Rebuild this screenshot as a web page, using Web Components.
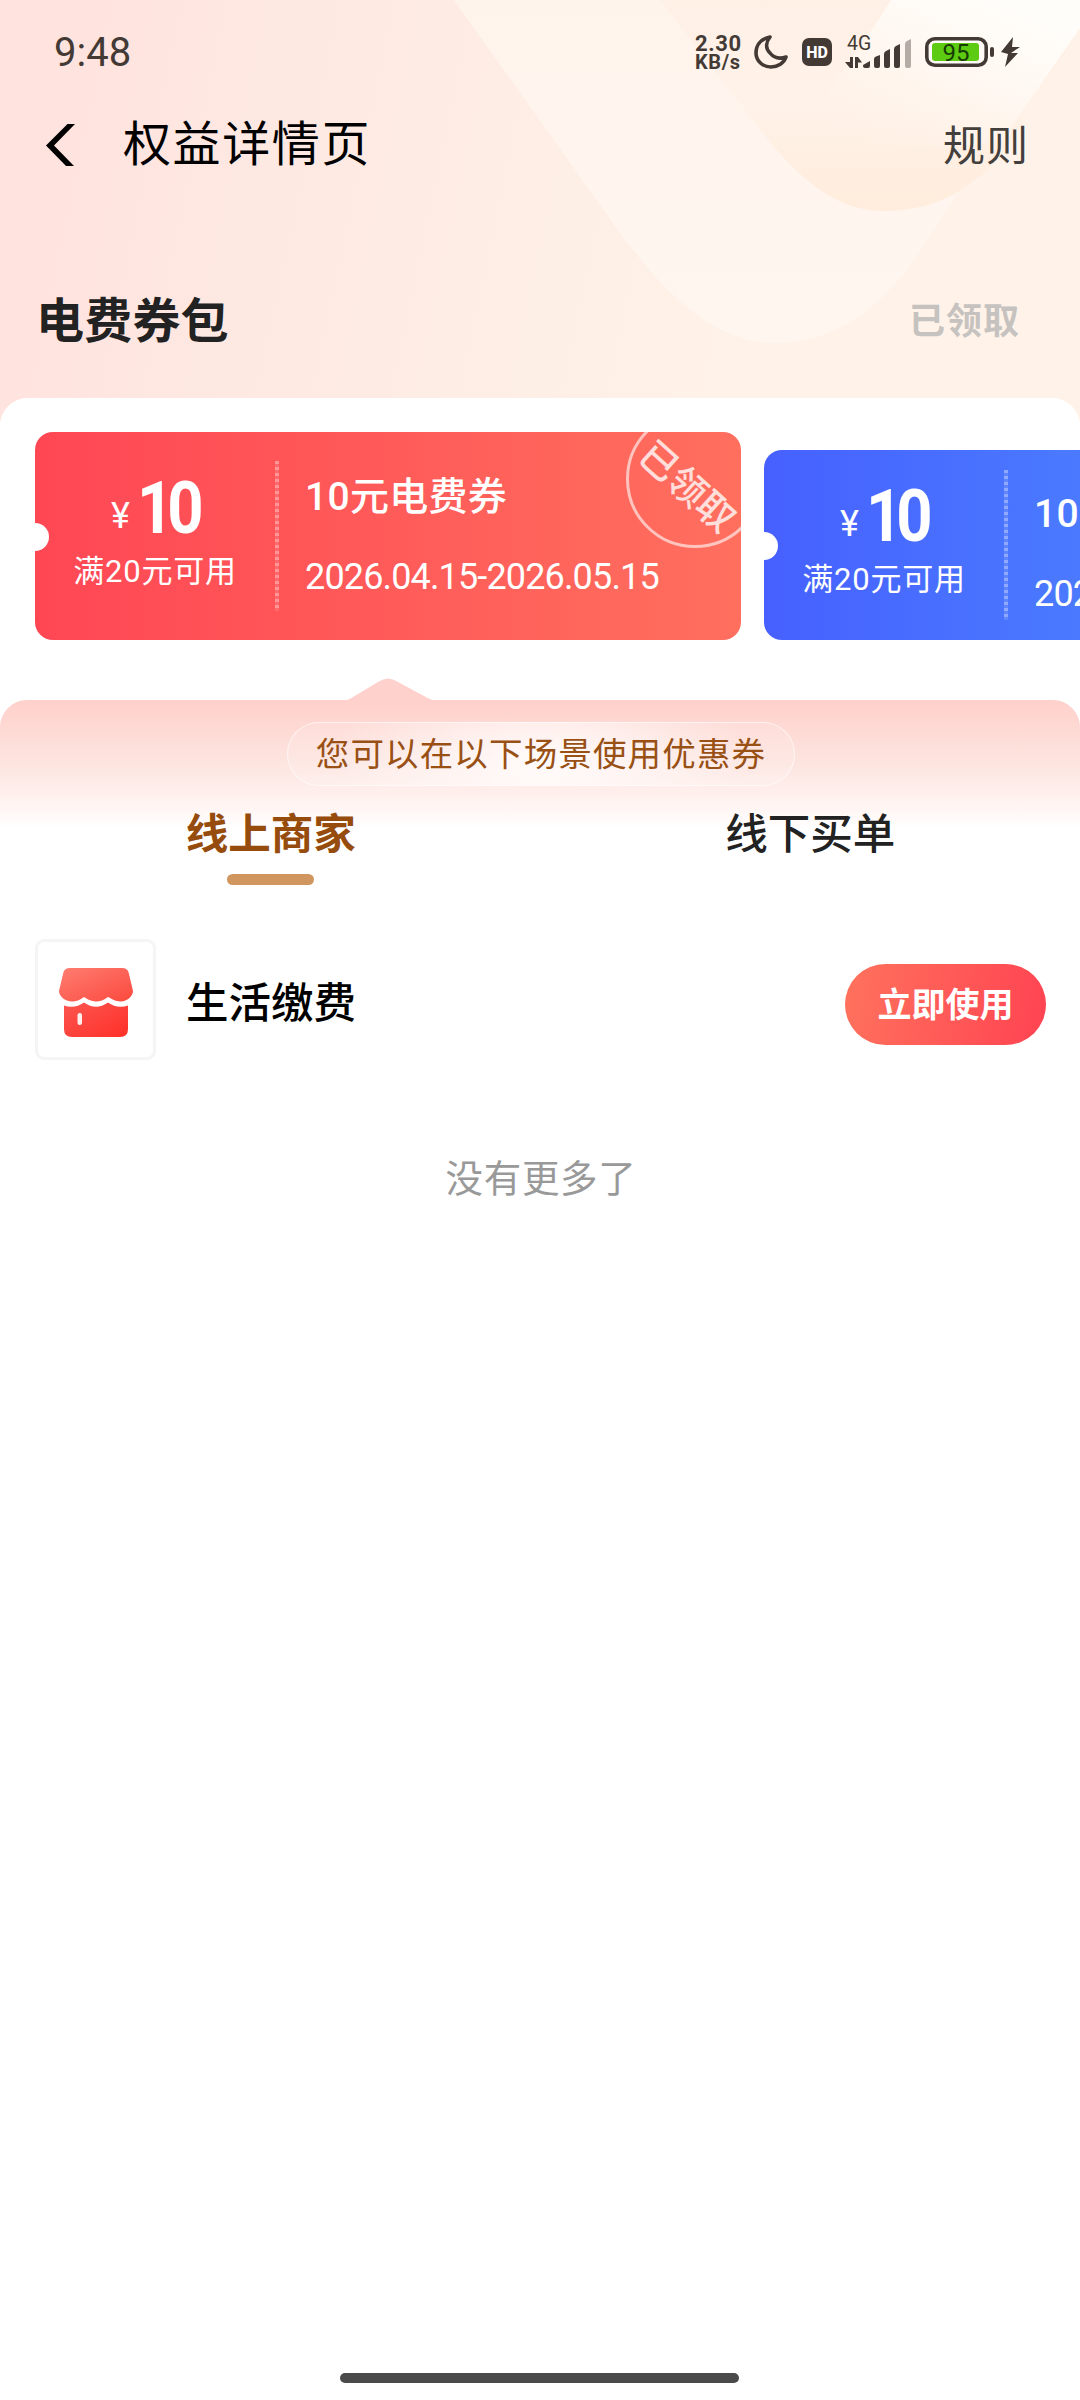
<!DOCTYPE html>
<html lang="zh-CN">
<head>
<meta charset="utf-8">
<title>权益详情页</title>
<style>
html,body{margin:0;padding:0;background:#fff}
body{width:1080px;height:2400px;overflow:hidden;font-family:Roboto,"Noto Sans CJK SC",sans-serif;color:#222}
</style>
</head>
<body>
<benefit-page></benefit-page>
<script>
function define(name, html, setup) {
  customElements.define(name, class extends HTMLElement {
    constructor() {
      super();
      const t = document.createElement('template');
      t.innerHTML = '<style>*{box-sizing:border-box}svg{display:block;flex:none}span{white-space:nowrap;line-height:1}</style>' + html;
      this.attachShadow({ mode: 'open' }).appendChild(t.content.cloneNode(true));
      if (setup) setup(this);
    }
  });
}

define('page-backdrop', `
<style>:host{display:block;position:absolute;left:0;top:0;width:1080px;height:440px;z-index:-1}</style>
<svg width="1080" height="440" viewBox="0 0 1080 440">
  <defs>
    <linearGradient id="base" gradientUnits="userSpaceOnUse" x1="60" y1="150" x2="810" y2="310">
      <stop offset="0" stop-color="#ffe3df"/><stop offset=".25" stop-color="#fee8e2"/><stop offset=".6" stop-color="#feeee5"/><stop offset="1" stop-color="#fff3e9"/>
    </linearGradient>
    <linearGradient id="outer" x1="0" y1="0" x2="0" y2="1">
      <stop offset="0" stop-color="#fff4ec"/><stop offset="1" stop-color="#fff6f0"/>
    </linearGradient>
    <linearGradient id="inner" x1="0" y1="0" x2="0" y2="1">
      <stop offset="0" stop-color="#fff0e6"/><stop offset=".5" stop-color="#fff2e8"/><stop offset="1" stop-color="#ffecdc"/>
    </linearGradient>
    <linearGradient id="shine" gradientUnits="userSpaceOnUse" x1="990" y1="0" x2="920" y2="165">
      <stop offset="0" stop-color="#fffdf9"/><stop offset=".5" stop-color="#fff7f0"/><stop offset="1" stop-color="#fff3ea" stop-opacity="0"/>
    </linearGradient>
  </defs>
  <rect width="1080" height="440" fill="url(#base)"/>
  <path d="M454 0L608 216C665 298 716 343 776 343C832 343 880 310 916 257L1080 22V0Z" fill="url(#outer)"/>
  <path d="M958 193Q1012 150 1080 64V440H800L916 257Z" fill="#fff3e9"/>
  <path d="M660 0L762 132C802 184 840 211 885 211C930 211 968 193 1003 154L1080 30V0Z" fill="url(#inner)"/>
  <path d="M891 0H1080V28L1003 139C960 154 850 144 780 146Q835 90 891 0Z" fill="url(#shine)"/>
</svg>`);

define('status-bar', `
<style>
:host{display:flex;align-items:center;height:104px;padding:0 60px 0 54px;color:#433a36}
.time{font-size:40px;margin-right:auto;padding-top:2px}
.speed{display:flex;flex-direction:column;font-weight:700;font-size:22px;width:49px;margin-right:10px;padding-top:1px;letter-spacing:.6px}
.speed span{line-height:19px;height:19px}
.speed span+span{font-size:20px}
</style>
<span class="time">9:48</span>
<div class="speed"><span>2.30</span><span>KB/s</span></div>
<svg width="34" height="34" viewBox="0 0 34 34" style="margin-right:14px"><path d="M16 2C6 4 2 11 2 18C2 26 9 32 17 32C24 32 30 28 32 22C26 24 20 23 16 18C11 13 12 7 16 2Z" fill="none" stroke="#433a36" stroke-width="3.6" stroke-linejoin="round"/></svg>
<svg width="30" height="28" viewBox="0 0 30 28" style="margin-right:13px"><rect width="30" height="28" rx="7" fill="#433a36"/><text x="15" y="19.5" font-family="Roboto" font-weight="800" font-size="16" text-anchor="middle" fill="#fff">HD</text></svg>
<svg width="67" height="34" viewBox="0 0 67 34" style="margin-right:13px" fill="#433a36">
  <text x="2" y="15" font-family="Roboto" font-size="19.5">4G</text>
  <path d="M5 22H8V33H5L0 27H5ZM10 33V22H13L17 27.500H13V33Z"/>
  <path d="M18 30L25 26V31Q25 33 23 33H20Q18 33 18 31Z"/>
  <path d="M29 24Q29 22 31 21.500L35 20V31Q35 33 33 33H31Q29 33 29 31Z"/>
  <path d="M39 19Q39 17 41 16L45 14V31Q45 33 43 33H41Q39 33 39 31Z"/>
  <path d="M49 14Q49 12 51 11L55 9V31Q55 33 53 33H51Q49 33 49 31Z"/>
  <path d="M60 9Q60 7 62 6L66 4V31Q66 33 64 33H62Q60 33 60 31Z" fill="#b5aca6"/>
</svg>
<svg width="70" height="30" viewBox="0 0 70 30" style="margin-right:6px">
  <rect x="1.800" y="1.800" width="59.400" height="26.400" rx="8" fill="#fffaf5" stroke="#433a36" stroke-width="3.600"/>
  <rect x="7" y="6" width="47" height="18" rx="3" fill="#5dcb11"/>
  <rect x="65" y="10" width="4" height="10" rx="2" fill="#433a36"/>
  <text x="31" y="23.500" font-family="Roboto" font-size="24" text-anchor="middle" fill="#173d05">95</text>
</svg>
<svg width="19" height="30" viewBox="0 0 19 30"><path d="M12 0L0 15L7 17L4 30L17 16H10L19 10L11 10Z" fill="#433a36"/></svg>
`);

define('nav-bar', `
<style>
:host{display:flex;align-items:center;height:80px;padding:2px 51px 0 46px}
.t{font-size:48px;letter-spacing:1.6px;color:#000;margin-left:47px;margin-right:auto}
.r{font-size:42px;letter-spacing:1px;color:#433f3c;padding-top:4px}
</style>
<svg width="30" height="42" viewBox="0 0 30 42"><path d="M21.500 0H29L8 21.500L28 42H20L0 21.500Z" fill="#000"/></svg>
<span class="t"><slot></slot></span><span class="r"><slot name="action"></slot></span>`);

define('pack-header', `
<style>
:host{display:flex;align-items:center;justify-content:space-between;height:214px;padding:61px 60px 0 36px}
.n{font-size:48px;font-weight:700;color:#222;letter-spacing:.2px}.s{font-size:36px;font-weight:700;letter-spacing:1px;color:#c6c2bf}
</style><span class="n"><slot></slot></span><span class="s"><slot name="state"></slot></span>`);

define('claimed-stamp', `
<style>
:host{position:absolute;left:591px;top:-22px;width:138px;height:138px;border:3.500px solid rgba(255,255,255,.6);border-radius:50%;display:flex;align-items:center;justify-content:center;color:rgba(255,255,255,.78)}
span{font-size:38px;font-weight:500;transform:translate(-8px,8px) rotate(42deg)}
</style><span><slot></slot></span>`);

define('coupon-card', `
<style>
:host{display:flex;flex:none;position:relative;width:706px;height:208px;border-radius:18px;overflow:hidden;color:#fff;
 background:linear-gradient(90deg,#ff4754,#ff6f5e)}
:host([tone=blue]){height:190px;background:linear-gradient(90deg,#4660ff,#4b7dff 50%,#4f90ff)}
:host::before{content:"";position:absolute;width:28px;height:28px;border-radius:50%;background:#fff;left:-14px;top:calc(50% - 13px)}
.amt{width:240px;flex:none;display:flex;flex-direction:column;align-items:center;padding-top:41px}
:host([tone=blue]) .amt{padding-top:31px}
.p{display:flex;align-items:baseline;gap:7px;height:66px;width:170px;padding-left:41px}
.p .y{font-size:36px;transform:translateY(-5px)}
.p .v{font-size:72px;font-weight:700;letter-spacing:-7px;line-height:66px;transform:scaleX(.88);transform-origin:0 50%}
.c{font-size:31px;margin-top:17px;letter-spacing:.8px}
i{display:block;width:4px;height:150px;align-self:center;flex:none;background:repeating-linear-gradient(180deg,rgba(255,255,255,.38) 0 3px,rgba(255,255,255,.12) 3px 6px)}
.d{display:flex;flex-direction:column;padding:46px 0 0 26px}
:host([tone=blue]) .d{padding-top:45px}
.n{font-size:39px;font-weight:500;letter-spacing:.3px}
.t{font-size:36px;margin-top:42px;letter-spacing:-.85px}
</style>
<div class="amt"><div class="p"><span class="y">¥</span><span class="v"><slot name="value"></slot></span></div><span class="c"><slot name="cond"></slot></span></div>
<i></i>
<div class="d"><span class="n"><slot name="name"></slot></span><span class="t"><slot name="date"></slot></span></div>
<slot></slot>`);

define('coupon-strip', `
<style>:host{display:flex;align-items:flex-end;gap:23px;height:302px;padding:34px 0 60px 35px;background:#fff;border-radius:28px 28px 0 0;overflow:hidden}</style><slot></slot>`);

define('scene-panel', `
<style>
:host{display:flex;flex-direction:column;position:relative;border-radius:27px 27px 0 0;background:linear-gradient(180deg,#ffd0cc 0,#fedad4 30px,#fde5e0 65px,#fff0ed 95px,#fff 130px)}
.arrow{position:absolute;left:341px;top:-22px}
.pill{align-self:center;margin:22px 0 0 1px;width:508px;height:64px;border-radius:32px;border:1.500px solid rgba(255,255,255,.6);background:radial-gradient(ellipse 210px 90px at 50% 60%,rgba(255,255,255,.85),rgba(255,255,255,.15));display:flex;align-items:center;justify-content:center}
.pill span{font-size:33.5px;letter-spacing:1.15px;color:#995014;padding:2px 0 0 1px}
</style>
<svg class="arrow" width="98" height="24" viewBox="0 0 98 24"><path d="M0 23Q6 23 12 19L37 4Q47-3 57 4L83 18Q91 23 98 23Z" fill="#ffd1cd"/></svg>
<div class="pill"><span><slot name="tip"></slot></span></div>
<slot></slot>`);

define('scene-tabs', `
<style>
:host{display:grid;grid-template-columns:1fr 1fr;height:113px;padding:28px 0 0 1px}
.tab{display:flex;flex-direction:column;align-items:center;gap:17px;font-size:42.5px;font-weight:500;color:#222}
.on{font-weight:700;color:#964c0c}
.on::after{content:"";width:87px;height:11px;border-radius:6px;background:#d1965f}
</style><div class="tab on"><span><slot name="online"></slot></span></div><div class="tab"><span><slot name="offline"></slot></span></div>`);

define('merchant-row', `
<style>
:host{display:flex;align-items:center;height:120px;margin-top:40px;padding:0 34px 0 35px}
.ic{width:121px;height:121px;border:3px solid #f5f5f5;border-radius:9px;display:flex;align-items:center;justify-content:center;padding-top:6px}
.n{font-size:42.5px;font-weight:500;color:#000;margin:11px auto 0 30px}
.b{width:201px;height:81px;margin-top:11px;border-radius:41px;background:linear-gradient(100deg,#ff725d,#ff4352);color:#fff;font-size:34px;font-weight:700;display:flex;align-items:center;justify-content:center}
</style>
<div class="ic"><svg width="76" height="70" viewBox="0 0 76 70">
<defs><linearGradient id="g" x1="0" y1="0" x2="1" y2="1"><stop offset="0" stop-color="#ff7d71"/><stop offset="1" stop-color="#fb493e"/></linearGradient>
<linearGradient id="h" x1="0" y1="0" x2="1" y2="1"><stop offset="0" stop-color="#fb5650"/><stop offset="1" stop-color="#ff3029"/></linearGradient></defs>
<path d="M12 1H64Q69 1 70.500 5L75 24C75 29 69 34.500 63 34.500C57 34.500 53 31.500 50 30C46 33 42 34.500 38 34.500C33 34.500 29 32 26 30C22 33 18 34.500 14 34.500C7 34.500 1 29 1 24L5.500 5Q7 1 12 1Z" fill="url(#g)"/>
<path d="M6 38.500Q17 42 26 35.500Q38 44 50 35.500Q59 42 70 38.500V62Q70 70 62 70H14Q6 70 6 62Z" fill="url(#h)"/>
<rect x="19.500" y="46" width="4.500" height="12" rx="2.200" fill="#fff1ef"/></svg></div>
<span class="n"><slot></slot></span><div class="b"><span><slot name="action"></slot></span></div>`);

define('end-note', `<style>:host{display:flex;justify-content:center;margin-top:102px;padding-left:2px;font-size:37.5px;letter-spacing:.7px;color:#999}</style><span><slot></slot></span>`);
define('home-indicator', `<style>:host{display:block;width:399px;height:10px;border-radius:5px;background:#4a4a4a;margin:auto auto 17px 340px}</style>`);

define('benefit-page', `
<style>:host{display:flex;flex-direction:column;position:relative;z-index:0;width:1080px;height:2400px}
.main{display:flex;flex-direction:column;flex:1;background:#fff;border-radius:28px 28px 0 0}</style>
<page-backdrop></page-backdrop>
<status-bar></status-bar>
<nav-bar>权益详情页<span slot="action">规则</span></nav-bar>
<pack-header>电费券包<span slot="state">已领取</span></pack-header>
<div class="main">
<coupon-strip>
  <coupon-card><span slot="value">10</span><span slot="cond">满20元可用</span><span slot="name">10元电费券</span><span slot="date">2026.04.15-2026.05.15</span><claimed-stamp>已领取</claimed-stamp></coupon-card>
  <coupon-card tone="blue"><span slot="value">10</span><span slot="cond">满20元可用</span><span slot="name">10元电费券</span><span slot="date">2026.04.15-2026.05.15</span></coupon-card>
</coupon-strip>
<scene-panel><span slot="tip">您可以在以下场景使用优惠券</span>
  <scene-tabs><span slot="online">线上商家</span><span slot="offline">线下买单</span></scene-tabs>
  <merchant-row>生活缴费<span slot="action">立即使用</span></merchant-row>
  <end-note>没有更多了</end-note>
</scene-panel>
<home-indicator></home-indicator>
</div>`);
</script>
</body>
</html>
